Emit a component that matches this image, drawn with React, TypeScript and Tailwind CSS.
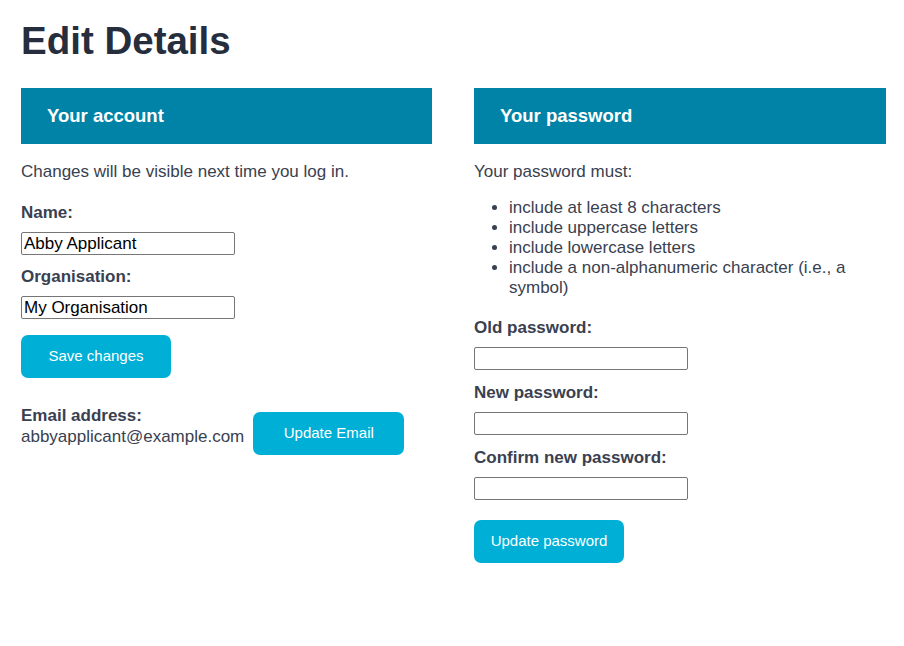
import React from "react";

const font = { fontFamily: '"Liberation Sans", Arial, Helvetica, sans-serif' };

function Label({ children }: { children: React.ReactNode }) {
  return <div className="text-[17px] leading-[20px] font-bold text-[#394150]">{children}</div>;
}

function Input({ value }: { value?: string }) {
  return (
    <input
      type="text"
      defaultValue={value}
      className="block w-[214px] h-[23px] border border-[#767676] rounded-[2px] px-[2px] text-[17px] leading-[19px] text-black bg-white outline-none"
      style={font}
    />
  );
}

function Button({ children, className = "" }: { children: React.ReactNode; className?: string }) {
  return (
    <button
      className={`h-[43px] w-[150px] rounded-[7px] bg-[#00afd6] text-white text-[15px] ${className}`}
      style={font}
    >
      {children}
    </button>
  );
}

function Header({ children }: { children: React.ReactNode }) {
  return (
    <div className="h-[56px] bg-[#0083a6] flex items-center pl-[26px] text-white text-[18.5px] font-bold">
      {children}
    </div>
  );
}

export default function App() {
  return (
    <div className="w-[904px] h-[646px] bg-white px-[21px] pt-[18px] text-[#394150]" style={font}>
      <h1 className="text-[38.5px] leading-[46px] font-bold text-[#262d3d]">Edit Details</h1>
      <div className="mt-[24px] grid grid-cols-[411px_412px] gap-x-[42px]">
        <div>
          <Header>Your account</Header>
          <p className="mt-[18px] text-[17px] leading-[20px]">Changes will be visible next time you log in.</p>
          <div className="mt-[21px]">
            <Label>Name:</Label>
            <div className="mt-[9px]">
              <Input value="Abby Applicant" />
            </div>
          </div>
          <div className="mt-[12px]">
            <Label>Organisation:</Label>
            <div className="mt-[9px]">
              <Input value="My Organisation" />
            </div>
          </div>
          <Button className="mt-[16px] block">Save changes</Button>
          <div className="mt-[28px] flex items-start gap-[9px]">
            <div>
              <Label>Email address:</Label>
              <div className="text-[17px] leading-[22px]">abbyapplicant@example.com</div>
            </div>
            <Button className="mt-[6px] w-[151px]">Update Email</Button>
          </div>
        </div>
        <div>
          <Header>Your password</Header>
          <p className="mt-[18px] text-[17px] leading-[20px]">Your password must:</p>
          <ul className="mt-[16px] pl-[35px] list-disc text-[17px] leading-[20px] marker:text-[#394150]">
            <li>include at least 8 characters</li>
            <li>include uppercase letters</li>
            <li>include lowercase letters</li>
            <li>include a non-alphanumeric character (i.e., a symbol)</li>
          </ul>
          <div className="mt-[20px]">
            <Label>Old password:</Label>
            <div className="mt-[9px]">
              <Input />
            </div>
          </div>
          <div className="mt-[13px]">
            <Label>New password:</Label>
            <div className="mt-[9px]">
              <Input />
            </div>
          </div>
          <div className="mt-[13px]">
            <Label>Confirm new password:</Label>
            <div className="mt-[9px]">
              <Input />
            </div>
          </div>
          <Button className="mt-[20px] block">Update password</Button>
        </div>
      </div>
    </div>
  );
}
